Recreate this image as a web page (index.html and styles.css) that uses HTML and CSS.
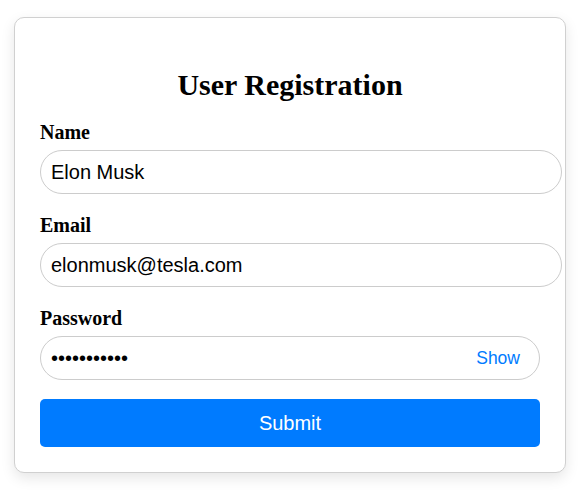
FILE: index.html
```html
<!DOCTYPE html>
<html lang="en">
<head>
<meta charset="utf-8">
<title>User Registration</title>
<link rel="stylesheet" href="styles.css">
</head>
<body>
<div class="page">
  <form class="card">
    <h2 class="title">User Registration</h2>
    <div class="field">
      <label class="label" for="name">Name</label>
      <input class="input input-wide" id="name" type="text" value="Elon Musk">
    </div>
    <div class="field">
      <label class="label" for="email">Email</label>
      <input class="input input-wide" id="email" type="email" value="elonmusk@tesla.com">
    </div>
    <div class="field field-last">
      <label class="label" for="password">Password</label>
      <div class="password-wrap">
        <input class="input input-pass" id="password" type="password" value="elonmusk123">
        <button class="show-btn" type="button">Show</button>
      </div>
    </div>
    <button class="submit" type="submit">Submit</button>
  </form>
</div>
</body>
</html>
```
FILE: styles.css
```css
html, body {
  margin: 0;
  padding: 0;
  background: #ffffff;
}

.page {
  padding: 17px 14px;
}

.card {
  width: 500px;
  padding: 25px;
  border: 1px solid #d0d0d0;
  border-radius: 10px;
  background: #ffffff;
  box-shadow: 0 5px 14px rgba(0, 0, 0, 0.1);
  display: block;
}

.title {
  margin: 25px 0 20px;
  font-family: "Liberation Serif", "Times New Roman", serif;
  font-size: 30px;
  font-weight: bold;
  line-height: 33px;
  text-align: center;
  color: #000;
}

.field {
  margin-bottom: 20px;
}

.field-last {
  margin-bottom: 19px;
}

.label {
  display: block;
  margin-bottom: 7px;
  font-family: "Liberation Serif", "Times New Roman", serif;
  font-size: 20px;
  font-weight: bold;
  line-height: 22px;
  color: #000;
}

.input {
  display: block;
  height: 44px;
  padding: 0 10px;
  border: 1px solid #cccccc;
  border-radius: 22px;
  font-family: "Liberation Sans", Arial, sans-serif;
  font-size: 20px;
  color: #000;
  background: #fff;
  outline: none;
  margin: 0;
}

.input-wide {
  box-sizing: content-box;
  width: 100%;
  height: 42px;
}

.password-wrap {
  position: relative;
}

.input-pass {
  box-sizing: border-box;
  width: 100%;
}

.show-btn {
  position: absolute;
  right: 20px;
  top: 50%;
  transform: translateY(-50%);
  padding: 0;
  margin: 0;
  border: none;
  background: none;
  font-family: "Liberation Sans", Arial, sans-serif;
  font-size: 17.5px;
  color: #007bff;
  cursor: pointer;
}

.submit {
  display: block;
  width: 100%;
  height: 48px;
  margin: 0;
  padding: 0;
  border: none;
  border-radius: 5px;
  background: #007bff;
  color: #ffffff;
  font-family: "Liberation Sans", Arial, sans-serif;
  font-size: 20px;
  cursor: pointer;
}
```
